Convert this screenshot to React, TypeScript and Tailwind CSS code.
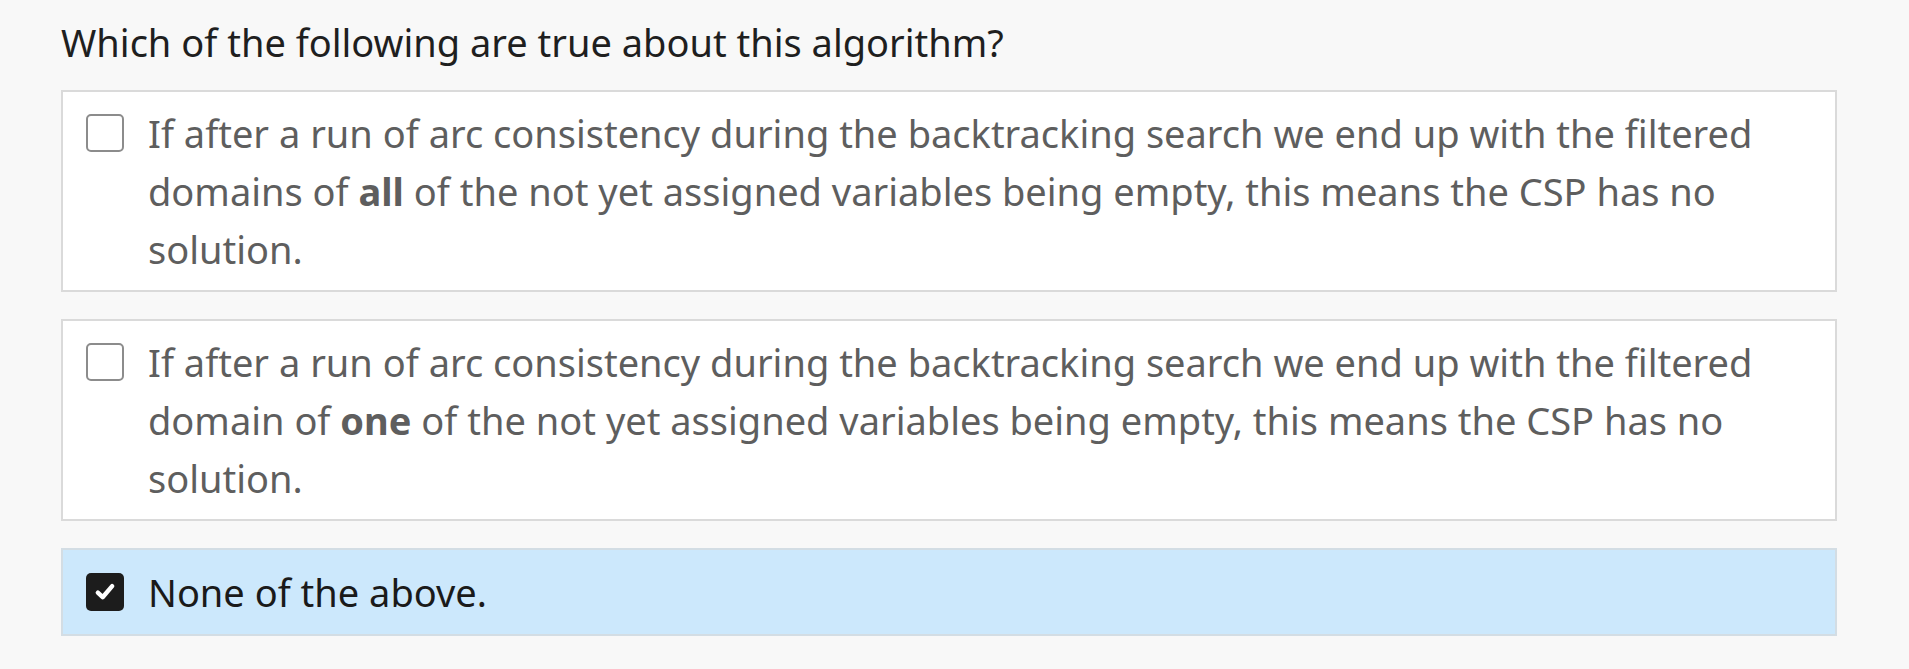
import React from 'react';

interface Choice {
  id: number;
  checked: boolean;
  content: React.ReactNode;
}

const choices: Choice[] = [
  {
    id: 1,
    checked: false,
    content: (
      <>
        If after a run of arc consistency during the backtracking search we end up with the filtered
        domains of <strong className="font-bold">all</strong> of the not yet assigned variables being
        empty, this means the CSP has no solution.
      </>
    ),
  },
  {
    id: 2,
    checked: false,
    content: (
      <>
        If after a run of arc consistency during the backtracking search we end up with the filtered
        domain of <strong className="font-bold">one</strong> of the not yet assigned variables being
        empty, this means the CSP has no solution.
      </>
    ),
  },
  {
    id: 3,
    checked: true,
    content: <>None of the above.</>,
  },
];

const CheckBox: React.FC<{ checked: boolean }> = ({ checked }) => {
  if (checked) {
    return (
      <div className="flex h-[38px] w-[38px] shrink-0 items-center justify-center rounded-[5px] bg-[#1c1c1c]">
        <svg width="26" height="26" viewBox="0 0 20 20" fill="none">
          <path
            d="M4.5 10.5 L8.2 14 L15.5 5.5"
            stroke="white"
            strokeWidth="3.4"
            strokeLinecap="round"
            strokeLinejoin="round"
          />
        </svg>
      </div>
    );
  }
  return (
    <div className="h-[38px] w-[38px] shrink-0 rounded-[5px] border-2 border-[#8c8c8c] bg-white" />
  );
};

export default function App() {
  return (
    <div
      className="min-h-[669px] w-full bg-[#f8f8f8] pl-[61px] pr-[72px] pt-[13px]"
      style={{ fontFamily: '"Noto Sans", "Open Sans", sans-serif' }}
    >
      <h2 className="text-[38px] font-normal leading-[58px] text-[#1f1f1f]">
        Which of the following are true about this algorithm?
      </h2>

      <div className="mt-[19px] flex flex-col gap-[27px]">
        {choices.map((choice) => (
          <div
            key={choice.id}
            className={
              choice.checked
                ? 'flex items-start gap-[24px] border-2 border-[#d3dde4] bg-[#cce8fc] py-[13px] pl-[23px] pr-[40px]'
                : 'flex items-start gap-[24px] border-2 border-[#dadada] bg-white py-[12px] pl-[23px] pr-[40px]'
            }
          >
            <div className="flex h-[58px] items-center">
              <CheckBox checked={choice.checked} />
            </div>
            <p
              className={
                choice.checked
                  ? 'text-[38px] leading-[58px] text-[#1a1a1a]'
                  : 'text-[38px] leading-[58px] text-[#5e5e5e]'
              }
            >
              {choice.content}
            </p>
          </div>
        ))}
      </div>
    </div>
  );
}
